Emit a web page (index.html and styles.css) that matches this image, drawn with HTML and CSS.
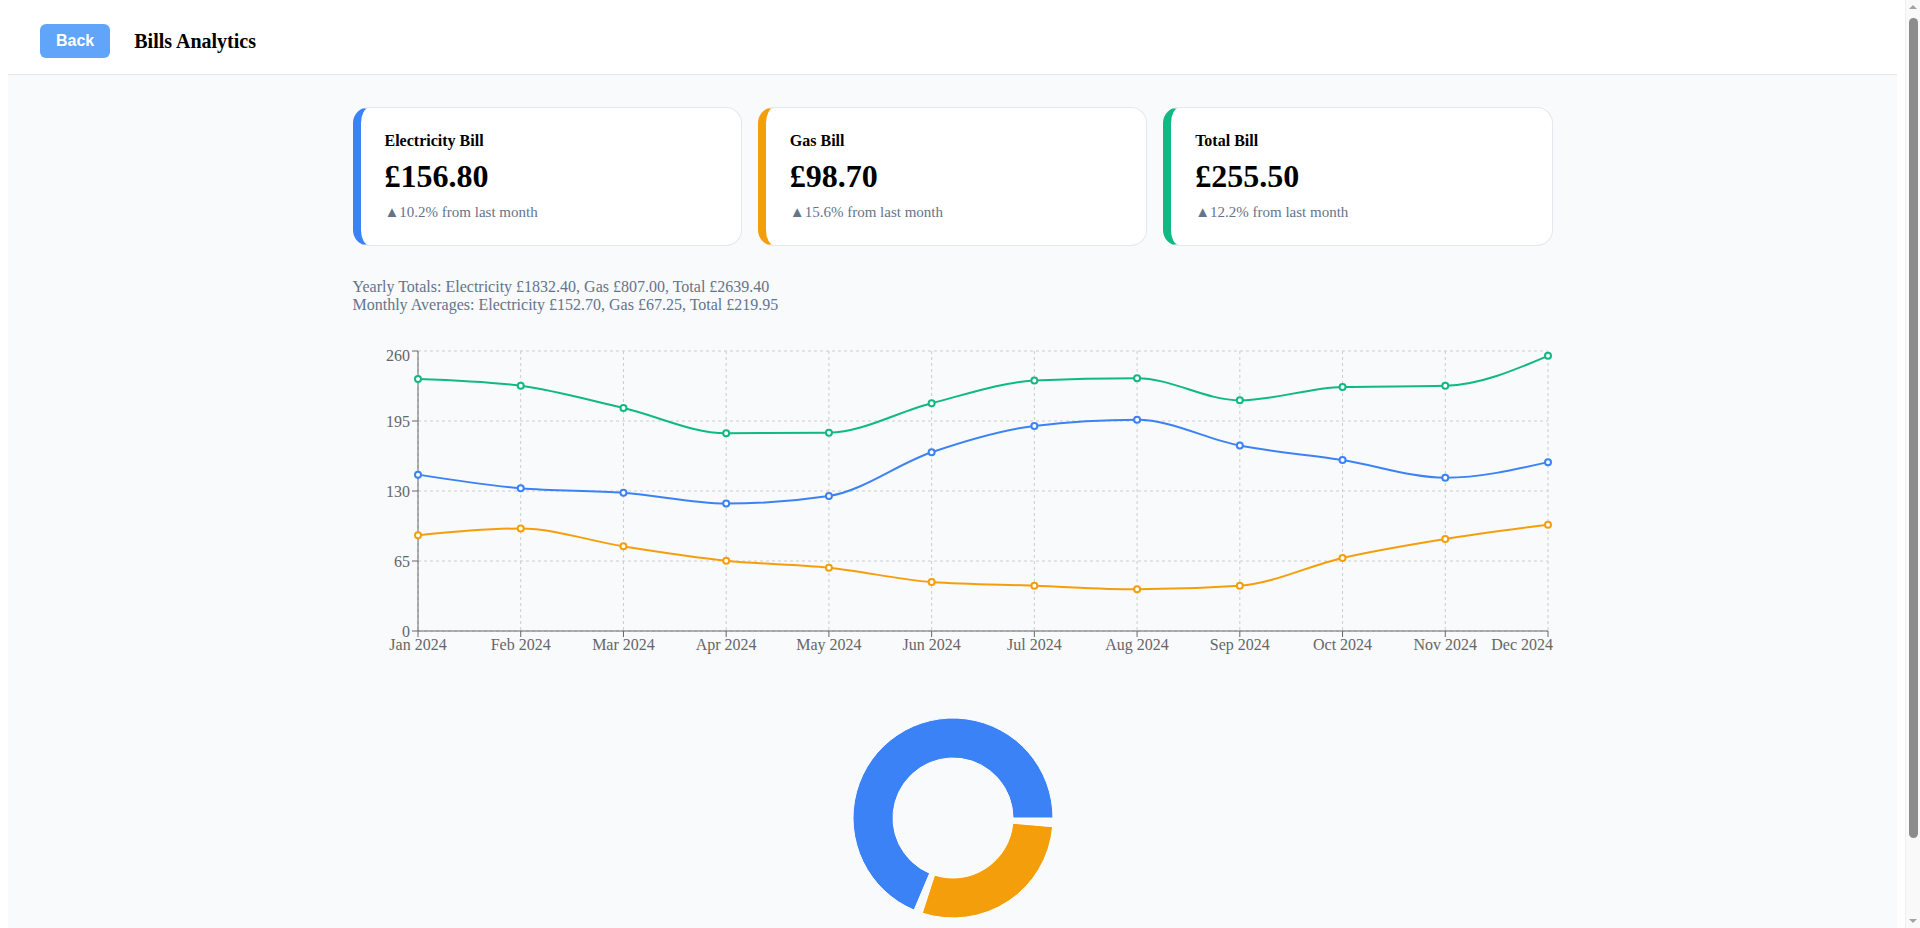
FILE: index.html
```html
<!DOCTYPE html>
<html lang="en">
<head>
<meta charset="utf-8">
<title>Bills Analytics</title>
<link rel="stylesheet" href="styles.css">
</head>
<body>
<div class="app">
  <header class="topbar">
    <button class="back-btn" type="button">Back</button>
    <h1 class="page-title">Bills Analytics</h1>
  </header>
  <main class="content">
    <div class="inner">
      <section class="cards">
        <div class="card card-elec">
          <h3 class="card-title">Electricity Bill</h3>
          <p class="card-value">£156.80</p>
          <p class="card-change">▲10.2% from last month</p>
        </div>
        <div class="card card-gas">
          <h3 class="card-title">Gas Bill</h3>
          <p class="card-value">£98.70</p>
          <p class="card-change">▲15.6% from last month</p>
        </div>
        <div class="card card-total">
          <h3 class="card-title">Total Bill</h3>
          <p class="card-value">£255.50</p>
          <p class="card-change">▲12.2% from last month</p>
        </div>
      </section>
      <section class="stats">
        <p class="stats-line">Yearly Totals: Electricity £1832.40, Gas £807.00, Total £2639.40</p>
        <p class="stats-line">Monthly Averages: Electricity £152.70, Gas £67.25, Total £219.95</p>
      </section>
      <div class="chart-box">
        <svg id="line-chart" class="line-chart" width="1200" height="320" viewBox="0 0 1200 320"></svg>
      </div>
      <div class="pie-box">
        <svg id="pie-chart" class="pie-chart" width="1200" height="285" viewBox="0 0 1200 285"></svg>
      </div>
    </div>
  </main>
</div>
<div class="fake-scrollbar" aria-hidden="true">
  <span class="sb-up"></span>
  <span class="sb-thumb"></span>
  <span class="sb-down"></span>
</div>
<script src="script.js"></script>
</body>
</html>
```

FILE: styles.css
```css
* {
  box-sizing: border-box;
}

html {
  scrollbar-width: none;
}

body {
  margin: 8px 23px 8px 8px;
  background: #ffffff;
  color: #000000;
  font-family: "Liberation Serif", "Times New Roman", serif;
}

.topbar {
  display: flex;
  align-items: center;
  gap: 24px;
  padding: 16px 32px;
  background: #ffffff;
  border-bottom: 1px solid #e5e7eb;
}

.back-btn {
  font-family: "Liberation Sans", Arial, sans-serif;
  font-weight: 700;
  font-size: 16px;
  line-height: 18px;
  color: #ffffff;
  background: #60a5fa;
  border: none;
  border-radius: 6px;
  padding: 8px 16px;
}

.page-title {
  margin: 0;
  font-size: 20px;
  font-weight: 700;
}

.content {
  background: #f8fafc;
  padding: 32px 0;
}

.inner {
  max-width: 1200px;
  margin: 0 auto;
}

.cards {
  display: grid;
  grid-template-columns: repeat(3, 1fr);
  gap: 16px;
}

.card {
  background: #ffffff;
  border: 1px solid #e5e7eb;
  border-left: 8px solid #3b82f6;
  border-radius: 16px;
  padding: 24px;
}

.card-elec { border-left-color: #3b82f6; }
.card-gas { border-left-color: #f59e0b; }
.card-total { border-left-color: #10b981; }

.card-title {
  margin: 0 0 8px;
  font-size: 16px;
  font-weight: 700;
}

.card-value {
  margin: 0 0 9px;
  font-size: 32px;
  font-weight: 700;
}

.card-change {
  margin: 0;
  font-size: 15px;
  color: #64748b;
}

.stats {
  margin-top: 32px;
  color: #64748b;
  font-size: 16px;
}

.stats-line {
  margin: 0;
}

.chart-box {
  margin-top: 32px;
}

.line-chart,
.pie-chart {
  display: block;
  overflow: visible;
}

.pie-box {
  margin-top: 32px;
}

.grid-line {
  stroke: #cccccc;
  stroke-dasharray: 3 3;
  fill: none;
}

.axis-line {
  stroke: #666666;
  fill: none;
}

.tick-label {
  fill: #666666;
  font-size: 16px;
  font-family: "Liberation Serif", "Times New Roman", serif;
}

.series {
  fill: none;
  stroke-width: 2;
}

.dot {
  fill: #ffffff;
  stroke-width: 2;
}

/* browser scrollbar as it appears in the capture */
.fake-scrollbar {
  position: fixed;
  top: 0;
  right: 0;
  width: 15px;
  height: 100%;
  background: #f9f9f9;
  border-left: 1px solid #f0f0f0;
  display: flex;
  flex-direction: column;
  align-items: center;
}

.sb-up {
  margin-top: 5px;
  width: 0;
  height: 0;
  border-left: 4px solid transparent;
  border-right: 4px solid transparent;
  border-bottom: 4px solid #a3a3a3;
}

.sb-thumb {
  margin-top: 9px;
  width: 9px;
  height: 820px;
  border-radius: 5px;
  background: #8c8c8c;
}

.sb-down {
  margin-top: auto;
  margin-bottom: 5px;
  width: 0;
  height: 0;
  border-left: 4px solid transparent;
  border-right: 4px solid transparent;
  border-top: 4px solid #a3a3a3;
}
```

FILE: script.js
```js
(function () {
  var NS = 'http://www.w3.org/2000/svg';
  var months = ['Jan 2024', 'Feb 2024', 'Mar 2024', 'Apr 2024', 'May 2024', 'Jun 2024',
    'Jul 2024', 'Aug 2024', 'Sep 2024', 'Oct 2024', 'Nov 2024', 'Dec 2024'];
  var elec = [145.2, 132.5, 128.4, 118.3, 125.4, 166.0, 190.4, 196.1, 172.2, 158.8, 142.3, 156.8];
  var gas = [88.9, 95.2, 78.6, 65.3, 58.8, 45.5, 42.1, 38.7, 42.0, 67.8, 85.4, 98.7];
  var total = elec.map(function (e, i) { return Math.round((e + gas[i]) * 100) / 100; });

  var L = 65, R = 1195, T = 5, B = 285, MAX = 260;
  function xs(i) { return L + i * (R - L) / 11; }
  function ys(v) { return B - v / MAX * (B - T); }

  function el(name, attrs, parent) {
    var n = document.createElementNS(NS, name);
    for (var k in attrs) n.setAttribute(k, attrs[k]);
    if (parent) parent.appendChild(n);
    return n;
  }

  var svg = document.getElementById('line-chart');
  var grid = el('g', {}, svg);
  var yTicks = [0, 65, 130, 195, 260];
  yTicks.forEach(function (v) {
    el('line', { x1: L, x2: R, y1: ys(v), y2: ys(v), 'class': 'grid-line' }, grid);
  });
  months.forEach(function (m, i) {
    el('line', { x1: xs(i), x2: xs(i), y1: T, y2: B, 'class': 'grid-line' }, grid);
  });

  var axes = el('g', {}, svg);
  el('line', { x1: L, x2: R, y1: B, y2: B, 'class': 'axis-line' }, axes);
  el('line', { x1: L, x2: L, y1: T, y2: B, 'class': 'axis-line' }, axes);
  yTicks.forEach(function (v) {
    el('line', { x1: L - 6, x2: L, y1: ys(v), y2: ys(v), 'class': 'axis-line' }, axes);
    var top = v === MAX;
    var t = el('text', { x: L - 8, y: ys(v) + (top ? 4 : 0), dy: '0.355em', 'text-anchor': 'end', 'class': 'tick-label' }, axes);
    t.textContent = String(v);
  });
  months.forEach(function (m, i) {
    el('line', { x1: xs(i), x2: xs(i), y1: B, y2: B + 6, 'class': 'axis-line' }, axes);
    var last = i === months.length - 1;
    var t = el('text', {
      x: last ? 1200 : xs(i), y: B + 8, dy: '0.71em',
      'text-anchor': last ? 'end' : 'middle', 'class': 'tick-label'
    }, axes);
    t.textContent = m;
  });

  function sign(x) { return x < 0 ? -1 : 1; }
  function monotonePath(pts) {
    var n = pts.length, m = new Array(n), i;
    for (i = 1; i < n - 1; i++) {
      var h0 = pts[i][0] - pts[i - 1][0], h1 = pts[i + 1][0] - pts[i][0];
      var s0 = (pts[i][1] - pts[i - 1][1]) / h0, s1 = (pts[i + 1][1] - pts[i][1]) / h1;
      var p = (s0 * h1 + s1 * h0) / (h0 + h1);
      m[i] = (sign(s0) + sign(s1)) * Math.min(Math.abs(s0), Math.abs(s1), 0.5 * Math.abs(p)) || 0;
    }
    var hF = pts[1][0] - pts[0][0];
    m[0] = (3 * (pts[1][1] - pts[0][1]) / hF - m[1]) / 2;
    var hL = pts[n - 1][0] - pts[n - 2][0];
    m[n - 1] = (3 * (pts[n - 1][1] - pts[n - 2][1]) / hL - m[n - 2]) / 2;
    var d = 'M' + pts[0][0] + ',' + pts[0][1];
    for (i = 0; i < n - 1; i++) {
      var dx = (pts[i + 1][0] - pts[i][0]) / 3;
      d += 'C' + (pts[i][0] + dx) + ',' + (pts[i][1] + dx * m[i]) + ',' +
        (pts[i + 1][0] - dx) + ',' + (pts[i + 1][1] - dx * m[i + 1]) + ',' +
        pts[i + 1][0] + ',' + pts[i + 1][1];
    }
    return d;
  }

  function series(data, color) {
    var g = el('g', {}, svg);
    var pts = data.map(function (v, i) { return [xs(i), ys(v)]; });
    el('path', { d: monotonePath(pts), stroke: color, 'class': 'series' }, g);
    pts.forEach(function (p) {
      el('circle', { cx: p[0], cy: p[1], r: 3, stroke: color, 'class': 'dot' }, g);
    });
  }
  series(elec, '#3b82f6');
  series(gas, '#f59e0b');
  series(total, '#10b981');

  /* donut: share of spend */
  var pie = document.getElementById('pie-chart');
  var cx = 600, cy = 120, ro = 100, ri = 60, pad = 5;
  var parts = [[70.6, '#3b82f6'], [29.4, '#f59e0b']];
  var totalAll = parts.reduce(function (a, p) { return a + p[0]; }, 0);
  var real = 360 - parts.length * pad;
  function pt(r, a) {
    var rad = a * Math.PI / 180;
    return (cx + r * Math.cos(rad)) + ',' + (cy - r * Math.sin(rad));
  }
  var start = 0;
  parts.forEach(function (p) {
    var span = p[0] / totalAll * real;
    var end = start + span;
    var large = span > 180 ? 1 : 0;
    var d = 'M' + pt(ro, start) +
      'A' + ro + ',' + ro + ' 0 ' + large + ' 0 ' + pt(ro, end) +
      'L' + pt(ri, end) +
      'A' + ri + ',' + ri + ' 0 ' + large + ' 1 ' + pt(ri, start) + 'Z';
    el('path', { d: d, fill: p[1], stroke: '#ffffff', 'stroke-width': 1 }, pie);
    start = end + pad;
  });
})();
```
